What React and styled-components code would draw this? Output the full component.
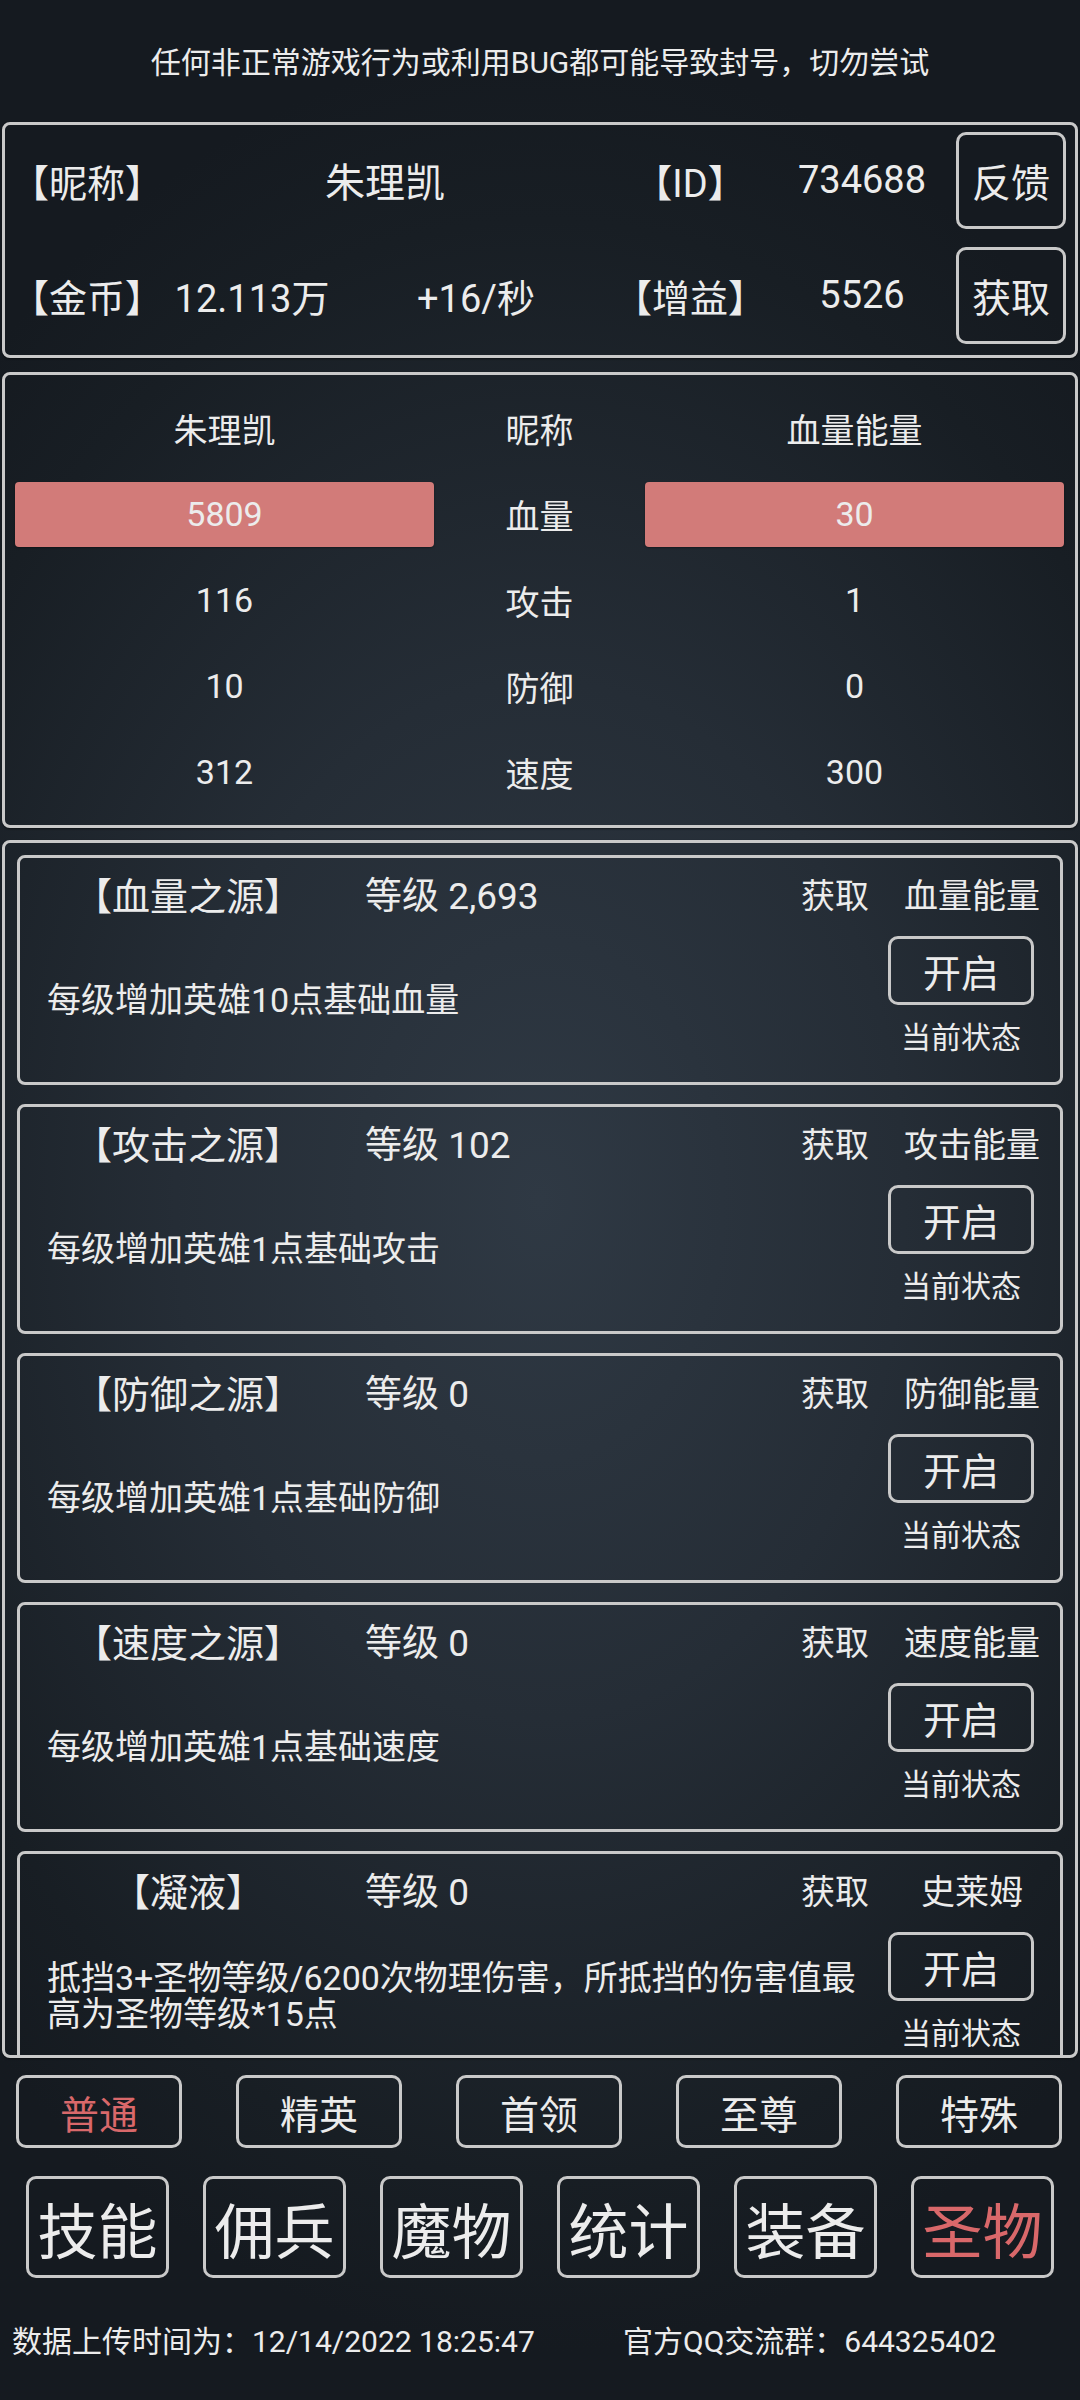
import styled, { createGlobalStyle } from "styled-components";

const GlobalStyle = createGlobalStyle`
  html, body {
    margin: 0;
    padding: 0;
  }
  body {
    width: 1080px;
    height: 2400px;
    overflow: hidden;
    background: radial-gradient(ellipse 75% 48% at 50% 50%, #2f3944 0%, #252d36 45%, #181e24 85%, #151a20 100%);
    color: #ececec;
    font-family: Roboto, "Noto Sans CJK SC", sans-serif;
  }
`;

const Page = styled.div`
  width: 1080px;
  height: 2400px;
  box-sizing: border-box;
  padding: 0 2px 0 2px;
  display: flex;
  flex-direction: column;
`;

const Notice = styled.div`
  height: 122px;
  display: flex;
  align-items: center;
  justify-content: center;
  font-size: 30px;
  padding-bottom: 2px;
  box-sizing: border-box;
`;

const Panel = styled.div`
  border: 3px solid #c9c9c9;
  border-radius: 8px;
  box-sizing: border-box;
  box-shadow: 0 1px 2px rgba(0, 0, 0, 0.5);
`;

const TopPanel = styled(Panel)`
  height: 236px;
  padding-left: 6px;
  display: grid;
  grid-template-columns: 150px 182px 266px 162px 182px 110px;
  grid-template-rows: 110px 120px;
  align-items: center;
  font-size: 38px;
`;

const Cell = styled.div`
  text-align: ${({ align }) => align || "center"};
  grid-column: ${({ span }) => span || "auto"};
  font-size: ${({ fs }) => (fs ? fs + "px" : "inherit")};
  white-space: nowrap;
`;

const SquareButton = styled.div`
  margin-left: 3px;
  width: 110px;
  height: 97px;
  border: 3px solid #c9c9c9;
  border-radius: 10px;
  box-sizing: border-box;
  display: flex;
  align-items: center;
  justify-content: center;
  font-size: 39px;
`;

const StatsPanel = styled(Panel)`
  margin-top: 14px;
  height: 456px;
  padding: 10px 10px;
  display: grid;
  grid-template-columns: 419px 211px 419px;
  grid-auto-rows: 86px;
  align-items: center;
  font-size: 34px;
`;

const StatCell = styled.div`
  height: 65px;
  display: flex;
  align-items: center;
  justify-content: center;
  border-radius: 4px;
  background: ${({ hot }) => (hot ? "#d27b79" : "transparent")};
  box-shadow: ${({ hot }) => (hot ? "0 1px 2px rgba(0,0,0,0.35)" : "none")};
`;

const SkillsPanel = styled(Panel)`
  margin-top: 12px;
  height: 1218px;
  padding: 12px 12px 0 12px;
  overflow: hidden;
  display: flex;
  flex-direction: column;
  gap: 19px;
`;

const SkillCard = styled.div`
  flex: none;
  height: 230px;
  border: 3px solid #c9c9c9;
  border-radius: 8px;
  box-sizing: border-box;
  display: flex;
  flex-direction: column;
  font-size: 34px;
`;

const CardHead = styled.div`
  height: 70px;
  display: grid;
  grid-template-columns: 336px 414px 130px 144px;
  align-items: center;
  font-size: 34px;
  white-space: nowrap;
`;

const Level = styled.div`
  padding-left: 9px;
  font-size: 37px;
`;

const CardBody = styled.div`
  flex: 1;
  display: flex;
  padding: 0 26px 10px 27px;
`;

const Desc = styled.div`
  flex: 1;
  align-self: center;
  max-width: 825px;
  line-height: 36px;
`;

const Side = styled.div`
  margin-left: auto;
  width: 146px;
  padding-top: 8px;
  display: flex;
  flex-direction: column;
  align-items: center;
`;

const OpenButton = styled.div`
  width: 146px;
  height: 69px;
  border: 3px solid #c9c9c9;
  border-radius: 10px;
  box-sizing: border-box;
  display: flex;
  align-items: center;
  justify-content: center;
  font-size: 38px;
`;

const Status = styled.div`
  margin-top: 15px;
  font-size: 30px;
  line-height: 36px;
`;

const TabRow = styled.div`
  margin-top: ${({ top }) => top}px;
  padding-left: ${({ left }) => left}px;
  display: flex;
  gap: ${({ gap }) => gap}px;
`;

const Tab = styled.div`
  width: ${({ w }) => w}px;
  height: ${({ h }) => h}px;
  border: 3px solid #c9c9c9;
  border-radius: 10px;
  box-sizing: border-box;
  display: flex;
  align-items: center;
  justify-content: center;
  font-size: ${({ fs }) => fs}px;
  color: ${({ active }) => (active ? "#d9686a" : "#ececec")};
`;

const Footer = styled.div`
  height: 122px;
  display: grid;
  grid-template-columns: 611px auto;
  align-items: center;
  padding-left: 10px;
  font-size: 30px;
  white-space: nowrap;
`;

const stats = [
  ["朱理凯", "昵称", "血量能量", false],
  ["5809", "血量", "30", true],
  ["116", "攻击", "1", false],
  ["10", "防御", "0", false],
  ["312", "速度", "300", false],
];

const skills = [
  { name: "【血量之源】", level: "2,693", energy: "血量能量", desc: "每级增加英雄10点基础血量" },
  { name: "【攻击之源】", level: "102", energy: "攻击能量", desc: "每级增加英雄1点基础攻击" },
  { name: "【防御之源】", level: "0", energy: "防御能量", desc: "每级增加英雄1点基础防御" },
  { name: "【速度之源】", level: "0", energy: "速度能量", desc: "每级增加英雄1点基础速度" },
  {
    name: "【凝液】",
    level: "0",
    energy: "史莱姆",
    desc: "抵挡3+圣物等级/6200次物理伤害，所抵挡的伤害值最高为圣物等级*15点",
  },
];

const ranks = ["普通", "精英", "首领", "至尊", "特殊"];
const menus = ["技能", "佣兵", "魔物", "统计", "装备", "圣物"];

export default function App() {
  return (
    <>
      <GlobalStyle />
      <Page>
        <Notice>任何非正常游戏行为或利用BUG都可能导致封号，切勿尝试</Notice>

        <TopPanel>
          <Cell align="left">【昵称】</Cell>
          <Cell span="2 / 4" fs={40}>朱理凯</Cell>
          <Cell>【ID】</Cell>
          <Cell>734688</Cell>
          <SquareButton>反馈</SquareButton>

          <Cell align="left">【金币】</Cell>
          <Cell>12.113万</Cell>
          <Cell>+16/秒</Cell>
          <Cell>【增益】</Cell>
          <Cell>5526</Cell>
          <SquareButton>获取</SquareButton>
        </TopPanel>

        <StatsPanel>
          {stats.map(([a, b, c, hot]) => [
            <StatCell key={b + "l"} hot={hot}>{a}</StatCell>,
            <StatCell key={b + "m"}>{b}</StatCell>,
            <StatCell key={b + "r"} hot={hot}>{c}</StatCell>,
          ])}
        </StatsPanel>

        <SkillsPanel>
          {skills.map((s) => (
            <SkillCard key={s.name}>
              <CardHead>
                <Cell fs={38}>{s.name}</Cell>
                <Level>等级 {s.level}</Level>
                <Cell>获取</Cell>
                <Cell>{s.energy}</Cell>
              </CardHead>
              <CardBody>
                <Desc>{s.desc}</Desc>
                <Side>
                  <OpenButton>开启</OpenButton>
                  <Status>当前状态</Status>
                </Side>
              </CardBody>
            </SkillCard>
          ))}
        </SkillsPanel>

        <TabRow top={17} left={14} gap={54}>
          {ranks.map((r, i) => (
            <Tab key={r} w={166} h={73} fs={39} active={i === 0}>
              {r}
            </Tab>
          ))}
        </TabRow>

        <TabRow top={28} left={24} gap={34}>
          {menus.map((m, i) => (
            <Tab key={m} w={143} h={102} fs={60} active={i === menus.length - 1}>
              {m}
            </Tab>
          ))}
        </TabRow>

        <Footer>
          <div>数据上传时间为：12/14/2022 18:25:47</div>
          <div>官方QQ交流群：644325402</div>
        </Footer>
      </Page>
    </>
  );
}
